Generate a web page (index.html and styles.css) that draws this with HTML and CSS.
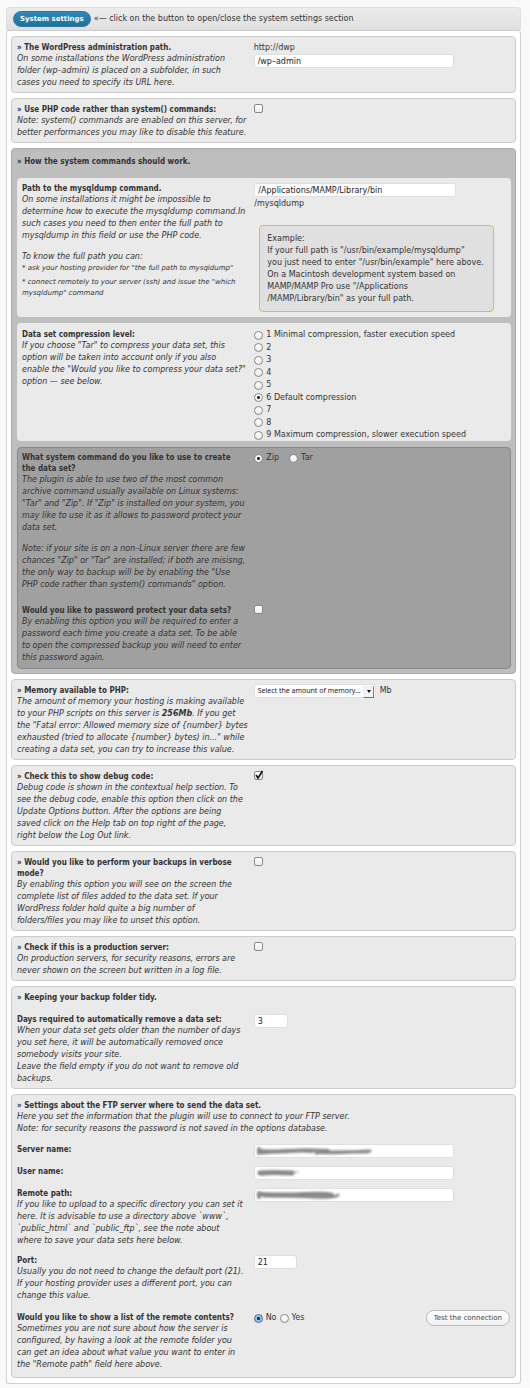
FILE: index.html
```html
<!DOCTYPE html>
<html lang="en">
<head>
<meta charset="utf-8">
<title>System settings</title>
<link rel="stylesheet" href="styles.css">
</head>
<body>
<form class="settings">
  <header class="bar">
    <button type="button" class="btn-primary">System settings</button>
    <span>«— click on the button to open/close the system settings section</span>
  </header>
  <main class="body">

    <section class="panel row">
      <div>
        <label class="title" for="admin">» The WordPress administration path.</label>
        <p class="desc">On some installations the WordPress administration<br>folder (wp–admin) is placed on a subfolder, in such<br>cases you need to specify its URL here.</p>
      </div>
      <div>
        <div class="plain">http://dwp</div>
        <input class="text" id="admin" type="text" value="/wp–admin">
      </div>
    </section>

    <section class="panel row">
      <div>
        <label class="title" for="php">» Use PHP code rather than system() commands:</label>
        <p class="desc">Note: system() commands are enabled on this server, for<br>better performances you may like to disable this feature.</p>
      </div>
      <div><input class="check" id="php" type="checkbox"></div>
    </section>

    <section class="panel group">
      <h2 class="title">» How the system commands should work.</h2>

      <div class="sub row dump">
        <div>
          <label class="title" for="dump">Path to the mysqldump command.</label>
          <p class="desc">On some installations it might be impossible to<br>determine how to execute the mysqldump command.In<br>such cases you need to then enter the full path to<br>mysqldump in this field or use the PHP code.</p>
          <p class="desc spaced">To know the full path you can:</p>
          <ul class="hints">
            <li>* ask your hosting provider for "the full path to mysqldump"</li>
            <li>* connect remotely to your server (ssh) and issue the "which<br>mysqldump" command</li>
          </ul>
        </div>
        <div>
          <input class="text" id="dump" type="text" value="/Applications/MAMP/Library/bin">
          <div class="plain">/mysqldump</div>
          <div class="example">Example:<br>If your full path is "/usr/bin/example/mysqldump"<br>you just need to enter "/usr/bin/example" here above.<br>On a Macintosh development system based on<br>MAMP/MAMP Pro use "/Applications<br>/MAMP/Library/bin" as your full path.</div>
        </div>
      </div>

      <div class="sub row levels-row">
        <div>
          <h3 class="title">Data set compression level:</h3>
          <p class="desc">If you choose "Tar" to compress your data set, this<br>option will be taken into account only if you also<br>enable the "Would you like to compress your data set?"<br>option — see below.</p>
        </div>
        <div class="levels">
          <label class="opt"><input class="radio" type="radio" name="level">1 Minimal compression, faster execution speed</label>
          <label class="opt"><input class="radio" type="radio" name="level">2</label>
          <label class="opt"><input class="radio" type="radio" name="level">3</label>
          <label class="opt"><input class="radio" type="radio" name="level">4</label>
          <label class="opt"><input class="radio" type="radio" name="level">5</label>
          <label class="opt"><input class="radio" type="radio" name="level" checked>6 Default compression</label>
          <label class="opt"><input class="radio" type="radio" name="level">7</label>
          <label class="opt"><input class="radio" type="radio" name="level">8</label>
          <label class="opt"><input class="radio" type="radio" name="level">9 Maximum compression, slower execution speed</label>
        </div>
      </div>

      <div class="sub dark">
        <div class="row">
          <div>
            <h3 class="title">What system command do you like to use to create<br>the data set?</h3>
            <p class="desc">The plugin is able to use two of the most common<br>archive command usually available on Linux systems:<br>"Tar" and "Zip". If "Zip" is installed on your system, you<br>may like to use it as it allows to password protect your<br>data set.</p>
            <p class="desc spaced">Note: if your site is on a non–Linux server there are few<br>chances "Zip" or "Tar" are installed; if both are misisng,<br>the only way to backup will be by enabling the "Use<br>PHP code rather than system() commands" option.</p>
          </div>
          <div class="inline wide">
            <label class="opt"><input class="radio" type="radio" name="cmd" checked>Zip</label>
            <label class="opt"><input class="radio" type="radio" name="cmd">Tar</label>
          </div>
        </div>
        <div class="row protect">
          <div>
            <label class="title" for="protect">Would you like to password protect your data sets?</label>
            <p class="desc">By enabling this option you will be required to enter a<br>password each time you create a data set. To be able<br>to open the compressed backup you will need to enter<br>this password again.</p>
          </div>
          <div><input class="check" id="protect" type="checkbox"></div>
        </div>
      </div>
    </section>

    <section class="panel row">
      <div>
        <label class="title" for="memory">» Memory available to PHP:</label>
        <p class="desc">The amount of memory your hosting is making available<br>to your PHP scripts on this server is <b>256Mb</b>. If you get<br>the "Fatal error: Allowed memory size of {number} bytes<br>exhausted (tried to allocate {number} bytes) in..." while<br>creating a data set, you can try to increase this value.</p>
      </div>
      <div class="inline">
        <span class="select-box"><select id="memory"><option>Select the amount of memory...</option></select></span>
        <span>Mb</span>
      </div>
    </section>

    <section class="panel row">
      <div>
        <label class="title" for="debug">» Check this to show debug code:</label>
        <p class="desc">Debug code is shown in the contextual help section. To<br>see the debug code, enable this option then click on the<br>Update Options button. After the options are being<br>saved click on the Help tab on top right of the page,<br>right below the Log Out link.</p>
      </div>
      <div class="tick-box">
        <input class="check" id="debug" type="checkbox" checked>
        <svg class="tick" viewBox="0 0 10 10" aria-hidden="true"><path d="M2 5 4 8 8.500 1" fill="none" stroke="#111" stroke-width="1.600"/></svg>
      </div>
    </section>

    <section class="panel row">
      <div>
        <label class="title" for="verbose">» Would you like to perform your backups in verbose<br>mode?</label>
        <p class="desc">By enabling this option you will see on the screen the<br>complete list of files added to the data set. If your<br>WordPress folder hold quite a big number of<br>folders/files you may like to unset this option.</p>
      </div>
      <div><input class="check" id="verbose" type="checkbox"></div>
    </section>

    <section class="panel row">
      <div>
        <label class="title" for="production">» Check if this is a production server:</label>
        <p class="desc">On production servers, for security reasons, errors are<br>never shown on the screen but written in a log file.</p>
      </div>
      <div><input class="check" id="production" type="checkbox"></div>
    </section>

    <section class="panel">
      <h2 class="title">» Keeping your backup folder tidy.</h2>
      <div class="row days">
        <div>
          <label class="title" for="days">Days required to automatically remove a data set:</label>
          <p class="desc">When your data set gets older than the number of days<br>you set here, it will be automatically removed once<br>somebody visits your site.<br>Leave the field empty if you do not want to remove old<br>backups.</p>
        </div>
        <div><input class="text tiny" id="days" type="text" value="3"></div>
      </div>
    </section>

    <section class="panel ftp">
      <div class="intro">
        <h2 class="title">» Settings about the FTP server where to send the data set.</h2>
        <p class="desc">Here you set the information that the plugin will use to connect to your FTP server.<br>Note: for security reasons the password is not saved in the options database.</p>
      </div>
      <div class="row">
        <label class="title" for="server">Server name:</label>
        <div class="masked">
          <input class="text" id="server" type="text">
          <svg class="smear" viewBox="0 0 120 14" aria-hidden="true"><g fill="none" stroke="#888" stroke-linecap="round"><path d="M3 5V9M4 7Q20 8 34 7T56 7" stroke-width="4"/><path d="M6 9Q30 6 55 6T70 8T114 7M60 9Q80 7 112 8" stroke-width="3"/></g></svg>
        </div>
      </div>
      <div class="row">
        <label class="title" for="user">User name:</label>
        <div class="masked">
          <input class="text" id="user" type="text">
          <svg class="smear" viewBox="0 0 120 14" aria-hidden="true"><g fill="none" stroke="#888" stroke-linecap="round"><path d="M4 7Q16 6 36 7" stroke-width="5"/><path d="M6 9Q22 7 42 6" stroke-width="1"/></g></svg>
        </div>
      </div>
      <div class="row">
        <div>
          <label class="title" for="remote">Remote path:</label>
          <p class="desc">If you like to upload to a specific directory you can set it<br>here. It is advisable to use a directory above `www`,<br>`public_html` and `public_ftp`, see the note about<br>where to save your data sets here below.</p>
        </div>
        <div class="masked">
          <input class="text" id="remote" type="text">
          <svg class="smear" viewBox="0 0 120 14" aria-hidden="true"><g fill="none" stroke="#888" stroke-linecap="round"><path d="M3 5V9M5 6Q30 7 50 6T76 7" stroke-width="4"/><path d="M8 8Q36 8 58 9T82 7" stroke-width="3"/></g></svg>
        </div>
      </div>
      <div class="row">
        <div>
          <label class="title" for="port">Port:</label>
          <p class="desc">Usually you do not need to change the default port (21).<br>If your hosting provider uses a different port, you can<br>change this value.</p>
        </div>
        <div><input class="text small" id="port" type="text" value="21"></div>
      </div>
      <div class="row list">
        <div>
          <h3 class="title">Would you like to show a list of the remote contents?</h3>
          <p class="desc">Sometimes you are not sure about how the server is<br>configured, by having a look at the remote folder you<br>can get an idea about what value you want to enter in<br>the "Remote path" field here above.</p>
        </div>
        <div class="inline remote">
          <label class="opt"><input class="radio blue" type="radio" name="list" checked>No</label>
          <label class="opt"><input class="radio" type="radio" name="list">Yes</label>
          <button type="button" class="btn">Test the connection</button>
        </div>
      </div>
    </section>
  </main>
</form>
</body>
</html>
```
FILE: styles.css
```css
* { box-sizing: border-box; }
body {
  margin: 0;
  padding: 7px 9px 4px 6px;
  background: #f9f9f9;
  color: #333;
  font: 8px/12px "DejaVu Sans", "Noto Sans", sans-serif;
  white-space: nowrap;
}
h2, h3, p, ul { margin: 0; padding: 0; }
button, input, select { margin: 0; font: inherit; color: inherit; }

.bar {
  display: flex;
  align-items: center;
  gap: 3px;
  height: 24px;
  padding: 0 6px;
  border: 1px solid #dfdfdf;
  border-bottom-color: #ccc;
  border-radius: 4px 4px 2px 2px;
  background: linear-gradient(#ececec, #dfdfdf);
}
.bar span { font-family: "Noto Sans", sans-serif; }
.bar span { font-family: inherit; }
.btn-primary {
  height: 16px;
  padding: 0 6px;
  border: 1px solid #2a7aa8;
  border-radius: 8px;
  background: linear-gradient(#3089ba, #21709c);
  color: #fff;
  font-size: 7px;
  font-weight: bold;
  line-height: 14px;
}
.body {
  display: flex;
  flex-direction: column;
  gap: 5px;
  padding: 5px 4px;
  border: 1px solid #d0d0d0;
  border-top: 0;
  border-radius: 3px;
  background: #fff;
}
.panel {
  padding: 5px 5px 3px;
  border: 1px solid #ccc;
  border-radius: 4px;
  background: #eaeaea;
}
.row { display: grid; grid-template-columns: 48% 52%; }
.title {
  display: block;
  font-family: "DejaVu Sans Condensed", "Noto Sans", sans-serif;
  font-size: 8px;
  font-weight: bold;
  line-height: 11px;
}
.desc { font-style: italic; }
.plain { line-height: 12px; }
.spaced { margin-top: 9px; }
.hints { list-style: none; font-size: 7px; font-style: italic; line-height: 11px; }
.hints li + li { margin-top: 3px; }

.text {
  display: block;
  width: 78%;
  height: 14px;
  padding: 0 3px;
  border: 1px solid #dfdfdf;
  border-radius: 3px;
  background: #fff;
  color: #222;
}
.sub .text { width: 80%; }
.tiny { width: 34px; }
.small { width: 43px; }

.check, .radio {
  appearance: none;
  display: block;
  flex: none;
  width: 9px;
  height: 9px;
  border: 1px solid #888;
  background: linear-gradient(#fff, #ececec);
}
.check { border-radius: 2px; }
.radio { border-radius: 50%; }
.radio:checked { background: radial-gradient(circle, #222 0 1px, #f6f6f6 2px); }
.radio.blue:checked { border-color: #456b9c; background: radial-gradient(circle, #123 0 1px, #8cc4f2 2px); }
.opt { display: flex; align-items: center; gap: 3px; }
.inline { display: flex; align-items: center; align-self: start; gap: 4px; height: 12px; }
.wide { gap: 10px; }
.remote { gap: 3px; }

.group { padding: 7px 4px 4px 5px; border-color: #aaa; background: #bebebe; }
.group > .title { margin-bottom: 11px; }
.sub { padding: 5px; border-radius: 4px; background: #eaeaea; }
.sub + .sub { margin-top: 6px; }
.dump .plain { margin-top: 1px; }
.example {
  margin: 15px 12px 0 5px;
  padding: 7px 7px 6px;
  border: 1px solid #f7b52c;
  border-radius: 4px;
  background: #e0e0e0;
}
.levels-row { min-height: 118px; padding: 6px 5px 0; }
.levels { display: flex; flex-direction: column; justify-content: space-between; }
.dark { padding: 4px; border: 1px solid #888; background: #a0a0a0; }
.protect { margin-top: 14px; }

.select-box { position: relative; }
.select-box select {
  appearance: none;
  display: block;
  height: 14px;
  padding: 0 13px 0 3px;
  border: 1px solid #dfdfdf;
  border-radius: 3px;
  background: #fff;
  color: #222;
  font-family: "Noto Sans", sans-serif;
  font-size: 7px;
}
.select-box::before {
  content: "";
  position: absolute;
  top: 2px;
  right: 2px;
  width: 9px;
  height: 10px;
  border: 1px solid #eee;
  border-right-color: #777;
  border-bottom-color: #777;
  background: #f3f3f3;
}
.select-box::after {
  content: "";
  position: absolute;
  top: 6px;
  right: 5px;
  border: 2px solid transparent;
  border-top: 3px solid #111;
  border-bottom: 0;
}
.tick-box, .masked { position: relative; }
.tick { position: absolute; top: -1px; left: 0; width: 10px; height: 10px; }
.smear { position: absolute; top: 0; left: 2px; width: 120px; height: 14px; filter: blur(1px); }

.days { margin-top: 11px; }
.ftp { display: flex; flex-direction: column; gap: 8px; padding-bottom: 6px; }
.intro { margin-bottom: 1px; }
.list { margin-top: 2px; }
.btn {
  height: 16px;
  margin-left: auto;
  padding: 0 7px;
  border: 1px solid #bbb;
  border-radius: 8px;
  background: linear-gradient(#fff, #f2f2f2);
  color: #464646;
  font-size: 7px;
  line-height: 14px;
}
```
